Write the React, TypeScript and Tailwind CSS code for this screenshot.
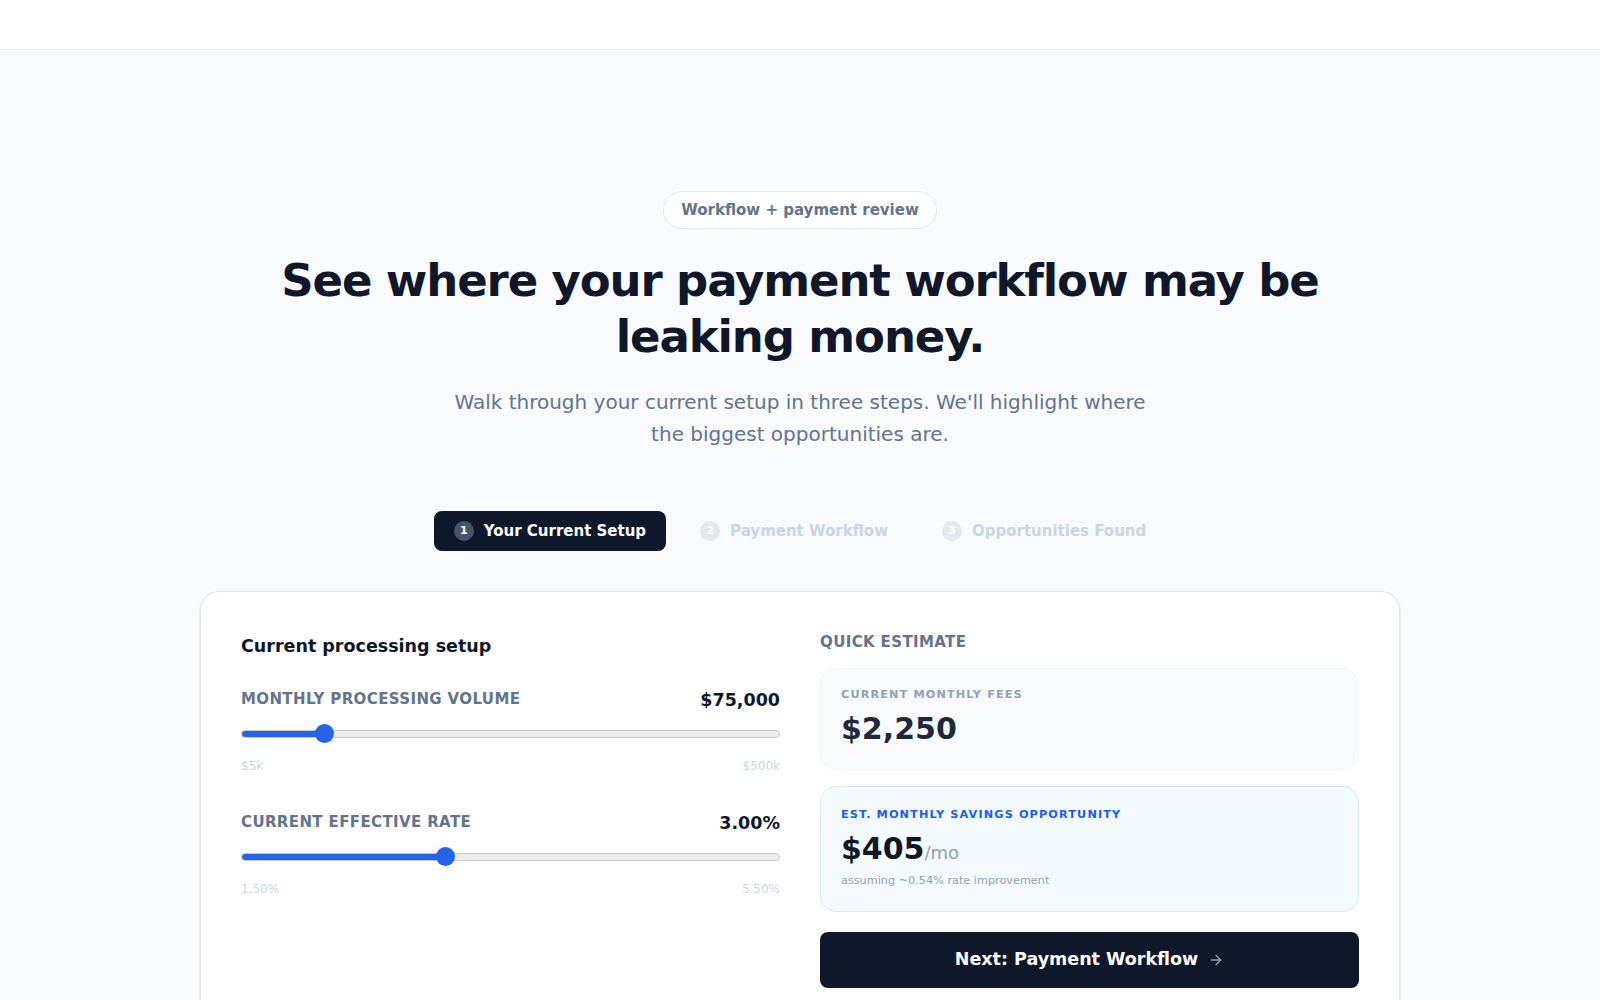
import { ArrowRight } from 'lucide-react';

const steps = [
  { n: 1, label: 'Your Current Setup', active: true },
  { n: 2, label: 'Payment Workflow', active: false },
  { n: 3, label: 'Opportunities Found', active: false },
];

function RangeField({
  label,
  value,
  min,
  max,
  current,
  minLabel,
  maxLabel,
  step,
}: {
  label: string;
  value: string;
  min: number;
  max: number;
  current: number;
  minLabel: string;
  maxLabel: string;
  step: number;
}) {
  const pct = ((current - min) / (max - min)) * 100;
  return (
    <div>
      <div className="flex items-center justify-between">
        <span className="text-[15px] font-bold uppercase tracking-wide text-slate-500">{label}</span>
        <span className="text-[17.5px] font-bold leading-7 text-slate-900">{value}</span>
      </div>
      <div className="mt-2.5 flex h-5 items-center">
        <input
          type="range"
          min={min}
          max={max}
          step={step}
          defaultValue={current}
          className="h-2 w-full cursor-pointer appearance-none rounded-full border border-[#c9c9c9] [&::-webkit-slider-thumb]:h-[19px] [&::-webkit-slider-thumb]:w-[19px] [&::-webkit-slider-thumb]:appearance-none [&::-webkit-slider-thumb]:rounded-full [&::-webkit-slider-thumb]:bg-[#2563eb]"
          style={{
            background: `linear-gradient(to right, #2563eb calc(9px + ${pct / 100} * (100% - 18px)), #ececec calc(9px + ${pct / 100} * (100% - 18px)))`,
          }}
        />
      </div>
      <div className="mt-3.5 flex justify-between text-xs text-slate-300">
        <span>{minLabel}</span>
        <span>{maxLabel}</span>
      </div>
    </div>
  );
}

export default function App() {
  return (
    <div className="min-h-screen bg-slate-50 font-['DejaVu_Sans',sans-serif] text-slate-900">
      <header className="h-[50px] border-b border-slate-200/70 bg-white" />

      <main className="flex flex-col items-center px-6 pt-[141px] pb-20">
        <span className="rounded-full border border-slate-200 bg-white px-[17px] py-2 text-[15px] font-bold leading-5 text-slate-500">
          Workflow + payment review
        </span>

        <h1 className="mt-6 max-w-[1100px] text-center text-[45px] font-bold leading-tight tracking-tight text-slate-900">
          See where your payment workflow may be leaking money.
        </h1>

        <p className="mt-5 max-w-[720px] text-center text-xl leading-relaxed text-slate-500">
          Walk through your current setup in three steps. We'll highlight where the biggest opportunities are.
        </p>

        <nav className="mt-15 flex items-center gap-3.5">
          {steps.map((s) => (
            <div
              key={s.n}
              className={
                s.active
                  ? 'flex items-center gap-2.5 rounded-lg bg-slate-900 px-5 py-2.5 text-[15px] font-bold leading-5 text-white'
                  : 'flex items-center gap-2.5 rounded-lg px-5 py-2.5 text-[15px] font-bold leading-5 text-slate-300'
              }
            >
              <span
                className={
                  s.active
                    ? 'flex h-5 w-5 items-center justify-center rounded-full bg-slate-600 text-[11px] font-bold text-white'
                    : 'flex h-5 w-5 items-center justify-center rounded-full bg-slate-200 text-[11px] font-bold text-white'
                }
              >
                {s.n}
              </span>
              {s.label}
            </div>
          ))}
        </nav>

        <section className="mt-10 grid w-full max-w-[1200px] grid-cols-2 gap-10 rounded-[20px] border border-slate-200 bg-white p-10 shadow-sm">
          <div>
            <h2 className="text-[17.5px] font-bold leading-7 text-slate-900">Current processing setup</h2>
            <div className="mt-[26px] flex flex-col gap-[35px]">
              <RangeField
                label="Monthly processing volume"
                value="$75,000"
                min={5000}
                max={500000}
                step={5000}
                current={75000}
                minLabel="$5k"
                maxLabel="$500k"
              />
              <RangeField
                label="Current effective rate"
                value="3.00%"
                min={1.5}
                max={5.5}
                step={0.05}
                current={3}
                minLabel="1.50%"
                maxLabel="5.50%"
              />
            </div>
          </div>

          <div>
            <h3 className="text-[15px] font-bold uppercase leading-5 tracking-wide text-slate-500">Quick estimate</h3>

            <div className="mt-4 rounded-2xl border border-slate-100 bg-slate-50 px-5 pt-[18px] pb-[22px]">
              <div className="text-[11.25px] font-bold uppercase leading-4 tracking-widest text-slate-400">
                Current monthly fees
              </div>
              <div className="mt-2 text-3xl font-bold text-slate-800">$2,250</div>
            </div>

            <div className="mt-4 rounded-2xl border border-blue-100 bg-blue-50/60 px-5 pt-5 pb-[22px]">
              <div className="text-[11.25px] font-bold uppercase leading-4 tracking-widest text-blue-600">
                Est. monthly savings opportunity
              </div>
              <div className="mt-2 flex items-baseline">
                <span className="text-3xl font-bold text-slate-900">$405</span>
                <span className="text-lg text-slate-400">/mo</span>
              </div>
              <div className="mt-1.5 text-[11.25px] leading-4 text-slate-400">assuming ~0.54% rate improvement</div>
            </div>

            <button className="mt-5 flex h-14 w-full items-center justify-center gap-2.5 rounded-lg bg-slate-900 text-[17.5px] font-bold text-white">
              Next: Payment Workflow
              <ArrowRight className="h-4 w-4 text-slate-400" />
            </button>
          </div>
        </section>
      </main>
    </div>
  );
}
